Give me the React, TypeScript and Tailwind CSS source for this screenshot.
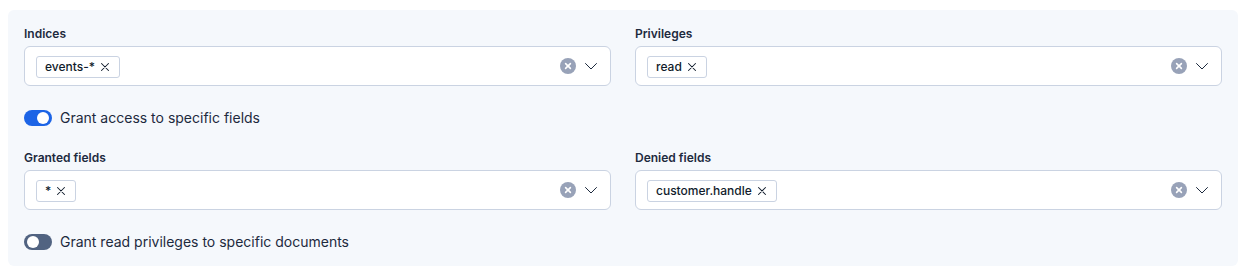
import React from "react";

const font = { fontFamily: "Inter, 'Noto Sans', sans-serif" };

function Chip({ label }: { label: string }) {
  return (
    <span className="inline-flex h-[22px] items-center gap-1 rounded-[3px] border border-[#cad3e2] bg-white pl-2 pr-2 text-[12px] font-medium leading-none text-[#111c2c]">
      <span>{label}</span>
      <svg width="12" height="12" viewBox="0 0 12 12" className="text-[#111c2c]">
        <path d="M2.5 2.5 L9.5 9.5 M9.5 2.5 L2.5 9.5" stroke="currentColor" strokeWidth="1.05" strokeLinecap="round" />
      </svg>
    </span>
  );
}

function ComboBox({ label, chip }: { label: string; chip: string }) {
  return (
    <div className="flex flex-col">
      <div className="mb-1 h-4 text-[12px] font-semibold leading-4 text-[#1d2a3e]">{label}</div>
      <div className="flex h-10 items-center rounded-[6px] border border-[#cad3e2] bg-white pl-[11px] pr-[12px]">
        <div className="flex-1 pb-[1px]">
          <Chip label={chip} />
        </div>
        <div className="flex items-center gap-[8px]">
          <svg width="16" height="16" viewBox="0 0 16 16">
            <circle cx="8" cy="8" r="8" fill="#98a2b8" />
            <path d="M5.6 5.6 L10.4 10.4 M10.4 5.6 L5.6 10.4" stroke="#ffffff" strokeWidth="1.6" strokeLinecap="round" />
          </svg>
          <svg width="14" height="14" viewBox="0 0 14 14">
            <path d="M1.5 4.5 L7 10 L12.5 4.5" stroke="#1d2a3e" strokeWidth="1" fill="none" strokeLinecap="round" strokeLinejoin="round" />
          </svg>
        </div>
      </div>
    </div>
  );
}

function Toggle({ on, label }: { on: boolean; label: string }) {
  return (
    <div className="flex h-5 items-center gap-2">
      <span
        className={
          on
            ? "relative flex h-4 w-7 items-center rounded-full bg-[#1c64e6]"
            : "relative flex h-4 w-7 items-center rounded-full bg-[#516381]"
        }
      >
        <span
          className={
            on
              ? "absolute left-[13px] h-3 w-3 rounded-full bg-white"
              : "absolute left-[3px] h-3 w-3 rounded-full bg-white"
          }
        />
      </span>
      <span className="text-[14px] leading-5 text-[#1d2a3e]">{label}</span>
    </div>
  );
}

export default function App() {
  return (
    <div className="h-[276px] w-[1246px] bg-white pl-2 pr-2 pt-[10px]" style={font}>
      <div className="flex flex-col rounded-[6px] bg-[#f5f8fc] px-4 pb-[14px] pt-4">
        <div className="grid grid-cols-2 gap-6">
          <ComboBox label="Indices" chip="events-*" />
          <ComboBox label="Privileges" chip="read" />
        </div>
        <div className="mt-[22px]">
          <Toggle on={true} label="Grant access to specific fields" />
        </div>
        <div className="mt-[22px] grid grid-cols-2 gap-6">
          <ComboBox label="Granted fields" chip="*" />
          <ComboBox label="Denied fields" chip="customer.handle" />
        </div>
        <div className="mt-[22px]">
          <Toggle on={false} label="Grant read privileges to specific documents" />
        </div>
      </div>
    </div>
  );
}
